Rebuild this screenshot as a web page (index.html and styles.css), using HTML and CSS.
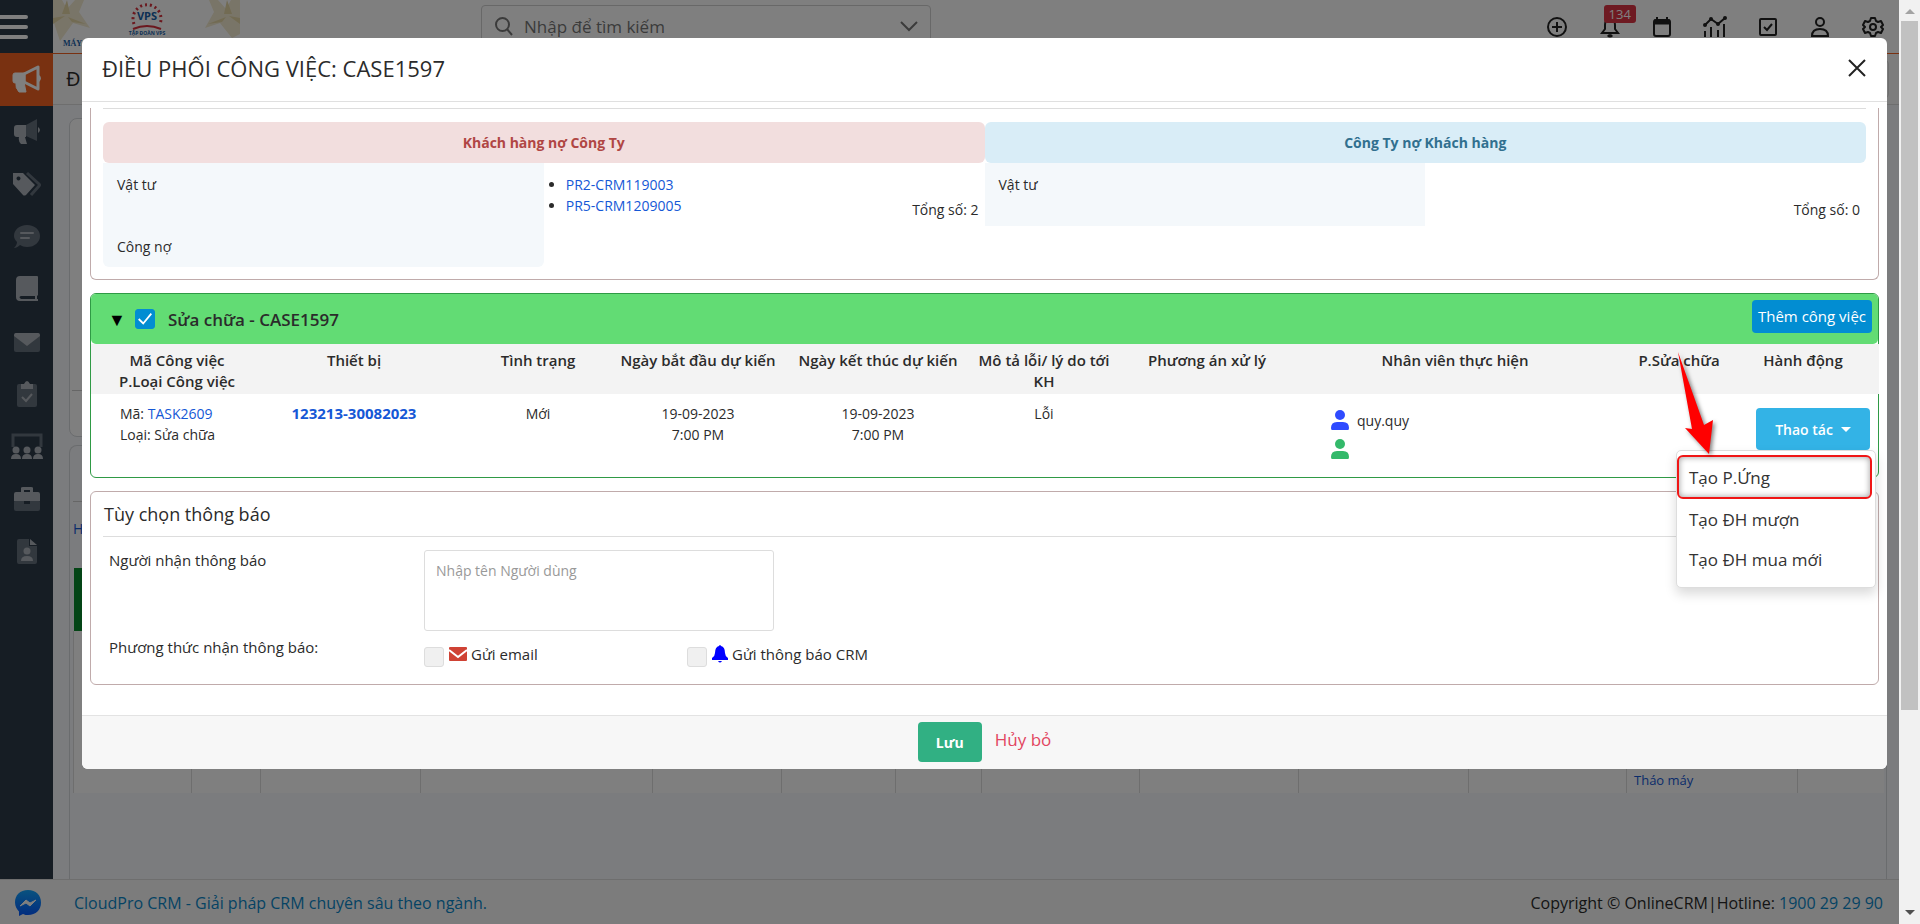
FILE: index.html
```html
<!DOCTYPE html>
<html lang="vi">
<head>
<meta charset="utf-8">
<title>CloudPro CRM</title>
<link rel="stylesheet" href="styles.css">
</head>
<body>
<div class="app">
  <div class="shell">
    <aside class="sidebar">
      <button class="burger" type="button" aria-label="Menu"><svg width="28" height="26" viewBox="0 0 28 26"><path d="M0 3h26M0 13h26M0 23h26" stroke="#fff" stroke-width="4" stroke-linecap="round"/></svg></button>
      <nav class="nav">
        <a class="nav-item active" href="#" aria-label="Marketing"><svg width="34" height="34" viewBox="0 0 34 34"><path d="M14 12l14-7v22l-14-7z" fill="none" stroke="#fff" stroke-width="3" stroke-linejoin="round"/><path d="M5 11h10v10H5q-2 0-2-2v-6q0-2 2-2zM6 20h8l2 10H9q-4-4-3-10z" fill="#fff" stroke="#fff" stroke-linejoin="round"/><path d="M29 13q4 3 0 7z" fill="#fff"/></svg></a>
        <a class="nav-item" href="#" aria-label="Chiến dịch"><svg width="28" height="28" viewBox="0 0 28 28"><path d="M13 7l11-6v22l-11-5z" fill="#65707c"/><path d="M4 7h9v12h-1l2 7H8q-3-3-2-7H4q-3 0-3-3v-6q0-3 3-3zM25 9q4 3 0 6z" fill="#adb3ba"/></svg></a>
        <a class="nav-item" href="#" aria-label="Thẻ"><svg width="30" height="28" viewBox="0 0 30 28"><path d="M1 3h10l12 12-9 10q-2 1-3 0L1 14zM6 6.500a2 2 0 1 0 1 0z" fill="#adb3ba" fill-rule="evenodd"/><path d="M15 3l12 11q1 1 0 2l-8 9" stroke="#65707c" stroke-width="3" fill="none"/></svg></a>
        <a class="nav-item" href="#" aria-label="Tin nhắn"><svg width="28" height="26" viewBox="0 0 28 26"><path d="M14 1c8 0 13 5 13 11s-5 11-13 11c-3 0-5-1-7-2-2 2-4 3-6 3 2-2 3-4 3-6-2-2-3-4-3-6C1 6 6 1 14 1z" fill="#65707c"/><path d="M8 9h12M8 14h8" stroke="#adb3ba" stroke-width="2" stroke-linecap="round"/></svg></a>
        <a class="nav-item" href="#" aria-label="Sổ"><svg width="24" height="28" viewBox="0 0 24 28"><path d="M5 1h17q1 0 1 1v18l-1 1v3h1v2H5q-4 0-4-4V5q0-4 4-4zM6 21q-3 1 0 3h14v-3z" fill="#adb3ba" fill-rule="evenodd"/></svg></a>
        <a class="nav-item" href="#" aria-label="Thư"><svg width="28" height="22" viewBox="0 0 28 22"><rect x="1" y="2" width="26" height="19" rx="2" fill="#65707c"/><path d="M3 2h22q2 0 2 3L14 15 1 5q0-3 2-3z" fill="#adb3ba"/></svg></a>
        <a class="nav-item" href="#" aria-label="Công việc"><svg width="22" height="28" viewBox="0 0 22 28"><rect x="1" y="4" width="20" height="23" rx="2" fill="#65707c"/><path d="M5 4h3q3-6 6 0h3v5H5z" fill="#adb3ba"/><path d="M6 17l4 4 6-7" fill="none" stroke="#adb3ba" stroke-width="2"/></svg></a>
        <a class="nav-item" href="#" aria-label="Nhóm"><svg width="34" height="28" viewBox="0 0 34 28"><path d="M3 14V2h28v12" fill="none" stroke="#65707c" stroke-width="3"/><g fill="#adb3ba"><circle cx="6" cy="17" r="3.500"/><circle cx="17" cy="17" r="3.500"/><circle cx="28" cy="17" r="3.500"/><path d="M1 26q0-5 5-5t5 5zM12 26q0-5 5-5t5 5zM23 26q0-5 5-5t5 5z"/></g></svg></a>
        <a class="nav-item" href="#" aria-label="Dự án"><svg width="28" height="26" viewBox="0 0 28 26"><rect x="1" y="14" width="26" height="11" rx="2" fill="#65707c"/><path d="M3 6h5V2q0-1 2-1h8q2 0 2 1v4h5q2 0 2 2v7H1V8q0-2 2-2zM11 4v2h6V4z" fill="#adb3ba" fill-rule="evenodd"/><rect x="11" y="15" width="6" height="3" fill="#2c3a49"/></svg></a>
        <a class="nav-item" href="#" aria-label="Hồ sơ"><svg width="22" height="28" viewBox="0 0 22 28"><path d="M3 1h10v7h8v16q0 2-2 2H3q-2 0-2-2V3q0-2 2-2z" fill="#65707c"/><path d="M14 1l7 6h-7z" fill="#adb3ba"/><circle cx="11" cy="13" r="3.500" fill="#adb3ba"/><path d="M5 23q0-5 6-5t6 5z" fill="#adb3ba"/></svg></a>
      </nav>
    </aside>
    <div class="main">
      <header class="topbar">
        <div class="logo">
          <svg width="188" height="50" viewBox="0 0 188 50"><g fill="#f3ead0"><path d="M0 0h9l5 9L22 0h9l-5 12 11 16-17-5-13 18L0 20z"/><path d="M187 0h-9l-5 9L165 0h-9l5 12-9 16 15-5 12 15 8-4z"/></g><g fill="#e4d6a6"><path d="M9 14L14 0l3 14zM12 16L0 24v-6zM15 17l18 7-14-2z"/><path d="M179 14l-5-14-3 14zM176 16l11 8v-6zM173 17l-18 7 14-2z"/></g><path d="M81 24a14 14 0 1 1 26 0" fill="none" stroke="#d6303c" stroke-width="3" stroke-dasharray="2 3"/><path d="M80 29q14-6 28 0" fill="none" stroke="#d6303c" stroke-width="2"/><text class="logo-vps" x="94" y="20">VPS</text><text class="logo-sub" x="94" y="35">TẬP ĐOÀN VPS</text><text class="logo-may" x="10" y="46">MÁY</text></svg>
        </div>
        <label class="search">
          <svg width="20" height="20" viewBox="0 0 20 20"><circle cx="8.500" cy="8.500" r="6.500" fill="none" stroke="#777" stroke-width="2"/><path d="M13 13l5 6" stroke="#777" stroke-width="2"/></svg>
          <input type="text" placeholder="Nhập để tìm kiếm" aria-label="Nhập để tìm kiếm">
          <svg width="18" height="12" viewBox="0 0 18 12"><path d="M1 2l8 8 8-8" fill="none" stroke="#777" stroke-width="2"/></svg>
        </label>
        <div class="tools">
          <button type="button" aria-label="Thêm"><svg width="22" height="22" viewBox="0 0 22 22"><circle cx="11" cy="11" r="9"/><path d="M11 6v10M6 11h10"/></svg></button>
          <button type="button" aria-label="Thông báo"><svg width="22" height="22" viewBox="0 0 22 22"><path d="M3 17h16l-3-4V9q0-6-5-6T6 9v4z"/><path d="M9 19q2 2 4 0" stroke-width="3"/></svg><span class="badge">134</span></button>
          <button type="button" aria-label="Lịch"><svg width="22" height="22" viewBox="0 0 22 22"><rect x="3" y="4" width="16" height="16" rx="2"/><path d="M3 6h16" stroke-width="5"/><path d="M6 1v4M16 1v4"/></svg></button>
          <button type="button" aria-label="Báo cáo"><svg width="24" height="22" viewBox="0 0 24 22"><path d="M2 9l6-6 7 5 7-6M2 15v6M8 11v10M15 14v7M21 8v13"/><circle cx="2" cy="9" r="1"/><circle cx="8" cy="3" r="1"/><circle cx="15" cy="8" r="1"/><circle cx="22" cy="2" r="1"/></svg></button>
          <button type="button" aria-label="Công việc"><svg width="22" height="22" viewBox="0 0 22 22"><rect x="3" y="3" width="16" height="16" rx="1"/><path d="M7 11l3 3 5-6"/></svg></button>
          <button type="button" aria-label="Tài khoản"><svg width="22" height="22" viewBox="0 0 22 22"><circle cx="11" cy="6" r="4"/><path d="M3 20q0-7 8-7t8 7z"/></svg></button>
          <button type="button" aria-label="Cài đặt"><svg width="22" height="22" viewBox="0 0 22 22"><circle cx="11" cy="11" r="3"/><path d="M9 2h4l1 3 2 1 3-1 2 4-2 2 2 2-2 4-3-1-2 1-1 3H9l-1-3-2-1-3 1-2-4 2-2-2-2 2-4 3 1 2-1z" stroke-linejoin="round"/></svg></button>
        </div>
      </header>
      <div class="titlebar"><span>ĐI</span><div class="titlebar-box"></div></div>
      <div class="content">
        <div class="card card-filter"><div class="card-filter-top">▼</div></div>
        <div class="card card-list">
          <div class="card-list-head"></div>
          <div class="card-list-tools">H</div>
          <table class="grid">
            <colgroup><col class="g1"><col class="g2"><col class="g3"><col class="g4"><col class="g5"><col class="g6"><col class="g7"><col class="g8"><col class="g9"><col class="g10"><col class="g11"><col class="g12"><col class="g13"></colgroup>
            <thead><tr><th></th><th></th><th></th><th></th><th></th><th></th><th></th><th></th><th></th><th></th><th></th><th></th><th></th></tr></thead>
            <tbody><tr><td></td><td></td><td></td><td></td><td></td><td></td><td></td><td></td><td></td><td></td><td></td><td><a href="#">Tháo máy</a></td><td></td></tr></tbody>
          </table>
        </div>
      </div>
    </div>
  </div>
  <footer class="footer">
    <svg width="28" height="28" viewBox="0 0 28 28"><defs><linearGradient id="m" x1="0" y1="0" x2="0" y2="1"><stop offset="0" stop-color="#12a5ff"/><stop offset="1" stop-color="#0558ff"/></linearGradient></defs><path d="M14 1C6 1 1 6 1 13.500c0 4 2 7 4 9V27l4-2c2 1 3 1 5 1 8 0 13-5 13-12.500S22 1 14 1z" fill="url(#m)"/><path d="M6 17l6-6 4 3 6-3-6 6-4-3z" fill="#fff" stroke="#fff" stroke-width="1"/></svg>
    <a class="brand" href="#">CloudPro CRM - Giải pháp CRM chuyên sâu theo ngành.</a>
    <span>Copyright © OnlineCRM|Hotline: <a href="#">1900 29 29 90</a></span>
  </footer>

  <div class="overlay">
    <section class="modal" role="dialog" aria-labelledby="modal-title">
      <header class="modal-head">
        <h1 id="modal-title">ĐIỀU PHỐI CÔNG VIỆC: CASE1597</h1>
        <button class="close" type="button" aria-label="Đóng"><svg width="18" height="18" viewBox="0 0 18 18"><path d="M1 1l16 16M17 1L1 17" stroke="#222" stroke-width="2"/></svg></button>
      </header>
      <div class="modal-body">
        <section class="panel debt">
          <div class="debt-col">
            <h2 class="debt-title owed">Khách hàng nợ Công Ty</h2>
            <div class="debt-row">
              <div class="debt-label">Vật tư</div>
              <ul class="debt-list"><li><a href="#">PR2-CRM119003</a></li><li><a href="#">PR5-CRM1209005</a></li></ul>
              <div class="debt-total">Tổng số: 2</div>
            </div>
            <div class="debt-row"><div class="debt-label last">Công nợ</div></div>
          </div>
          <div class="debt-col">
            <h2 class="debt-title owing">Công Ty nợ Khách hàng</h2>
            <div class="debt-row">
              <div class="debt-label">Vật tư</div>
              <ul class="debt-list"></ul>
              <div class="debt-total">Tổng số: 0</div>
            </div>
          </div>
        </section>

        <section class="panel repair">
          <div class="repair-head">
            <span class="caret">▼</span>
            <input class="check" type="checkbox" id="repair" checked>
            <label for="repair">Sửa chữa - CASE1597</label>
            <button class="btn-add" type="button">Thêm công việc</button>
          </div>
          <table class="tasks">
            <colgroup><col class="c1"><col class="c2"><col class="c3"><col class="c4"><col class="c5"><col class="c6"><col class="c7"><col class="c8"><col class="c9"><col class="c10"></colgroup>
            <thead><tr>
              <th>Mã Công việc<br>P.Loại Công việc</th><th class="device-cell">Thiết bị</th><th>Tình trạng</th><th>Ngày bắt đầu dự kiến</th><th>Ngày kết thúc dự kiến</th><th>Mô tả lỗi/ lý do tới<br>KH</th><th>Phương án xử lý</th><th>Nhân viên thực hiện</th><th>P.Sửa chữa</th><th>Hành động</th>
            </tr></thead>
            <tbody><tr>
              <td class="code">Mã: <a href="#">TASK2609</a><br>Loại: Sửa chữa</td>
              <td class="device-cell"><a class="device" href="#">123213-30082023</a></td>
              <td>Mới</td>
              <td>19-09-2023<br>7:00 PM</td>
              <td>19-09-2023<br>7:00 PM</td>
              <td>Lỗi</td>
              <td></td>
              <td class="staff">
                <div class="person"><svg width="18" height="20" viewBox="0 0 18 20" fill="#2f4bff"><circle cx="9" cy="5" r="5"/><path d="M1 20q-1 0-1-2 0-6 6-6h6q6 0 6 6 0 2-1 2z"/></svg>quy.quy</div>
                <div class="person"><svg width="18" height="20" viewBox="0 0 18 20" fill="#33b96a"><circle cx="9" cy="5" r="5"/><path d="M1 20q-1 0-1-2 0-6 6-6h6q6 0 6 6 0 2-1 2z"/></svg></div>
              </td>
              <td></td>
              <td class="actions">
                <div class="dropdown">
                  <button class="btn-action" type="button">Thao tác <span class="down"></span></button>
                  <div class="menu">
                    <a class="marked" href="#">Tạo P.Ứng</a>
                    <a href="#">Tạo ĐH mượn</a>
                    <a href="#">Tạo ĐH mua mới</a>
                  </div>
                  <svg class="arrow" width="50" height="112" viewBox="0 0 50 112"><path d="M4 4l26 73 9-5-4 34-24-26 7 1z" fill="#f00"/></svg>
                </div>
              </td>
            </tr></tbody>
          </table>
        </section>

        <section class="panel notify">
          <h2>Tùy chọn thông báo</h2>
          <div class="notify-form">
            <label for="receiver">Người nhận thông báo</label>
            <textarea id="receiver" placeholder="Nhập tên Người dùng"></textarea>
            <span>Phương thức nhận thông báo:</span>
            <div class="methods">
              <div class="method"><input class="check" type="checkbox" id="email"><label for="email"><svg width="18" height="14" viewBox="0 0 18 14"><rect width="18" height="14" rx="1" fill="#cf4234"/><path d="M0 3l9 7 9-7" fill="none" stroke="#fff" stroke-width="2"/></svg>Gửi email</label></div>
              <div class="method"><input class="check" type="checkbox" id="crm"><label for="crm"><svg width="16" height="18" viewBox="0 0 16 18" fill="#00f"><path d="M7 1q1-2 2 0 4 1 4 7 0 3 3 5v2H0v-2q3-2 3-5 0-6 4-7zM6 16h4q-2 3-4 0z"/></svg>Gửi thông báo CRM</label></div>
            </div>
          </div>
        </section>
      </div>
      <footer class="modal-foot">
        <button class="btn-save" type="button">Lưu</button>
        <a class="cancel" href="#">Hủy bỏ</a>
      </footer>
    </section>
  </div>
</div>
<div class="scroll" aria-hidden="true"><i class="up"></i><div class="thumb"></div><i class="dn"></i></div>
</body>
</html>
```
FILE: styles.css
```css
* { box-sizing: border-box; }
body { margin: 0; display: flex; height: 100vh; overflow: hidden; font: 14px/21px "Open Sans", "Noto Sans", sans-serif; color: #2b2b2b; }
a { color: #1558d6; text-decoration: none; }
button { font: inherit; border: 0; background: none; padding: 0; cursor: pointer; }
h1, h2, ul { margin: 0; padding: 0; font-weight: 400; }
table { border-collapse: collapse; table-layout: fixed; width: 100%; }

.app { position: relative; flex: 1; min-width: 0; display: flex; flex-direction: column; }
.shell { flex: 1; min-height: 0; display: flex; }

.sidebar { width: 53px; background: #2c3a49; }
.burger { height: 53px; display: flex; align-items: center; }
.nav { display: grid; grid-auto-rows: 1fr; height: 525px; }
.nav-item { display: flex; align-items: center; justify-content: center; }
.nav-item.active { background: #f26322; }

.main { flex: 1; min-width: 0; display: flex; flex-direction: column; background: #f7f9fc; }
.topbar { position: relative; display: flex; height: 54px; background: #fff; border-bottom: 1px solid #f26322; }
.logo { width: 428px; }
.logo-vps { font: bold 11px "Open Sans", sans-serif; fill: #1760a8; text-anchor: middle; }
.logo-sub { font: bold 5px "Open Sans", sans-serif; fill: #1760a8; text-anchor: middle; }
.logo-may { font: bold 8px "Liberation Serif", serif; fill: #1760a8; }
.search { display: flex; align-items: center; gap: 8px; width: 450px; height: 42px; margin-top: 5px; padding: 0 12px; border: 1px solid #d0d0d0; border-radius: 4px; }
.search input { flex: 1; min-width: 0; border: 0; outline: 0; background: none; font: 17px "Open Sans", sans-serif; }
.search input::placeholder { color: #777; opacity: 1; }
.tools { display: grid; grid-template-columns: repeat(7, 1fr); width: 368px; margin-left: auto; }
.tools button { position: relative; display: flex; justify-content: center; align-items: center; }
.tools svg { fill: none; stroke: #222; stroke-width: 2; }
.badge { position: absolute; left: 20px; top: 5px; padding: 0 5px; border-radius: 3px; background: #dc3545; color: #fff; font: 13px/18px "Open Sans", sans-serif; }
.titlebar { display: flex; justify-content: space-between; height: 51px; padding: 6px 10px 6px 13px; border-bottom: 1px solid #ddd; background: #fafafa; font: 20px/38px "Open Sans", sans-serif; }
.titlebar-box { width: 90px; border: 1px solid #ddd; border-radius: 4px; }
.content { flex: 1; display: flex; flex-direction: column; gap: 8px; padding: 13px 12px 0 16px; }
.card { border: 1px solid #d5d8dc; border-radius: 8px; }
.card-filter { height: 319px; padding: 0 2px; background: #fff; }
.card-filter-top { height: 272px; border-bottom: 1px solid #ccc; padding: 8px; font-size: 12px; }
.card-list { flex: 1; padding: 0 3px; border-bottom: 0; border-radius: 8px 8px 0 0; }
.card-list-head { height: 56px; border-bottom: 1px solid #ccc; }
.card-list-tools { height: 66px; padding-top: 16px; color: #1558d6; }
.grid th { height: 63px; background: #088a2c; }
.grid td { height: 162px; padding: 2px 7px; border-left: 1px solid #ddd; background: #fff; font-size: 13px; vertical-align: bottom; }
.g1 { width: 118px; } .g2 { width: 69px; } .g3 { width: 160px; } .g4 { width: 232px; } .g5 { width: 129px; } .g6 { width: 114px; }
.g7 { width: 86px; } .g8 { width: 158px; } .g9 { width: 159px; } .g10 { width: 170px; } .g11 { width: 158px; } .g12 { width: 171px; } .g13 { width: 86px; }

.footer { display: flex; align-items: center; height: 45px; padding: 2px 16px 0 14px; gap: 32px; border-top: 1px solid #ddd; background: #f8f9f8; font-size: 16px; }
.footer a { color: #0b87c9; }
.footer .brand { flex: 1; }

.overlay { position: absolute; inset: 0; padding: 38px 12px 0 82px; background: rgba(0, 0, 0, .5); }
.modal { border-radius: 6px; background: #fff; }
.modal-head { display: flex; justify-content: space-between; align-items: center; height: 64px; padding: 0 21px 4px 20px; border-bottom: 1px solid #e0e0e0; }
.modal-head h1 { font-size: 22px; line-height: 30px; }
.close { display: flex; }
.modal-body { display: flex; flex-direction: column; gap: 13px; padding: 6px 8px 30px; }
.panel { border: 1px solid #c0abab; border-radius: 6px; }

.debt { display: flex; border-top: 0; border-radius: 0 0 6px 6px; padding: 0 12px 12px; }
.debt-col { flex: 1; border-top: 1px solid #ddd; padding-top: 13px; }
.debt-title { padding: 10px; border-radius: 6px; font-size: 14px; line-height: 21px; font-weight: 700; text-align: center; }
.owed { background: #f2dede; color: #b04644; }
.owing { background: #d9edf7; color: #31708f; }
.debt-row { display: flex; min-height: 41px; }
.debt-row:nth-child(2) { min-height: 63px; }
.debt-label { width: 50%; padding: 11px 14px 9px; background: #f4f8fb; }
.debt-label.last { border-radius: 0 0 6px 6px; padding-top: 10px; }
.debt-list { flex: 1; padding: 11px 0 0 22px; }
.debt-total { align-self: flex-end; padding: 0 6px 6px 0; }

.repair { border-color: #2f9a45; }
.repair-head { display: flex; align-items: center; gap: 13px; height: 50px; padding: 0 6px 0 17px; border-radius: 5px; background: #62dc74; font-size: 17px; font-weight: 600; }
.caret { width: 14px; color: #000; font-size: 18px; }
.check { appearance: none; width: 20px; height: 20px; margin: 0; border: 1px solid #ddd; border-radius: 3px; background: #f0f0f0; }
.check:checked { border-color: #028dd2; background: #028dd2 url("data:image/svg+xml,%3Csvg xmlns='http://www.w3.org/2000/svg' viewBox='0 0 20 20'%3E%3Cpath d='M3 10l5 5 9-11' fill='none' stroke='%23fff' stroke-width='2'/%3E%3C/svg%3E") center / 100%; }
.btn-add { align-self: flex-start; margin: 6px 0 0 auto; padding: 0 6px; border-radius: 4px; background: #028dd2; color: #fff; font-size: 15px; line-height: 33px; font-weight: 400; }
.tasks th { height: 50px; padding: 6px 0 2px; background: #f3f3f3; font-size: 15px; line-height: 21px; font-weight: 600; vertical-align: top; text-align: center; white-space: nowrap; }
.tasks td { height: 83px; padding: 9px 0 0; vertical-align: top; text-align: center; }
.tasks th:first-child { padding-left: 14px; }
.tasks th:last-child { padding-right: 12px; }
.c1 { width: 158px; } .c2 { width: 222px; } .c3 { width: 134px; } .c4 { width: 186px; } .c5 { width: 174px; }
.c6 { width: 158px; } .c7 { width: 168px; } .c8 { width: 328px; } .c9 { width: 120px; } .c10 { width: 140px; }
.tasks td.code { padding-left: 29px; text-align: left; }
.tasks .device-cell { padding-right: 12px; }
.device { font-size: 15px; font-weight: 700; }
.tasks td.staff { padding: 16px 0 0 40px; text-align: left; }
.person { display: flex; align-items: flex-start; gap: 8px; height: 29px; }
.tasks td.actions { padding: 14px 9px 0 0; }
.dropdown { position: relative; width: 114px; margin-left: auto; }
.btn-action { display: flex; align-items: center; justify-content: center; gap: 8px; width: 100%; height: 42px; border-radius: 4px; background: #33b3e6; color: #fff; font-weight: 600; }
.down { border: 5px solid transparent; border-top-color: #fff; border-bottom: 0; }
.menu { position: absolute; right: -6px; top: 42px; width: 200px; padding: 4px 3px 8px 0; border: 1px solid #ddd; border-radius: 5px; background: #fff; box-shadow: 0 6px 12px rgba(0, 0, 0, .15); text-align: left; }
.menu a { display: block; padding: 4px 12px 2px; color: #333; font-size: 17px; line-height: 34px; }
.menu a.marked { border: 2px solid #f01616; border-radius: 6px; padding: 4px 10px 2px; box-shadow: inset 0 0 6px rgba(0, 0, 0, .4); }
.arrow { position: absolute; left: -82px; top: -60px; filter: drop-shadow(2px 2px 2px rgba(0, 0, 0, .5)); }

.notify { padding: 0 12px 17px; }
.notify h2 { padding: 7px 1px; border-bottom: 1px solid #ddd; font-size: 18px; line-height: 30px; font-weight: 500; }
.notify-form { display: grid; grid-template-columns: 315px 1fr; row-gap: 6px; padding: 13px 0 0 6px; font-size: 15px; font-weight: 500; }
.notify-form textarea { width: 350px; height: 81px; padding: 9px 11px; border: 1px solid #ddd; border-radius: 3px; resize: none; font: 14px/21px "Open Sans", sans-serif; }
.notify-form textarea::placeholder { color: #999; opacity: 1; }
.methods { display: grid; grid-template-columns: 263px auto; justify-content: start; padding-top: 4px; }
.method { display: flex; align-items: flex-end; gap: 5px; }
.method label { display: flex; align-items: center; gap: 4px; height: 26px; }

.modal-foot { display: flex; justify-content: center; align-items: flex-start; gap: 13px; height: 54px; padding: 6px 0 0; border-top: 1px solid #e3e3e3; border-radius: 0 0 6px 6px; background: #f7f7f7; }
.btn-save { width: 64px; height: 40px; border-radius: 4px; background: #31b083; color: #fff; font-weight: 700; }
.cancel { color: #e2455f; font-size: 17px; line-height: 36px; }

.scroll { display: flex; flex-direction: column; align-items: center; width: 21px; padding: 9px 0; background: #f1f1f1; }
.up, .dn { border: 5px solid transparent; }
.up { border-top: 0; border-bottom-color: #a3a3a3; }
.dn { margin-top: auto; border-bottom: 0; border-top-color: #505050; }
.thumb { width: 17px; height: 76%; margin-top: 7px; background: #c1c1c1; }
```
